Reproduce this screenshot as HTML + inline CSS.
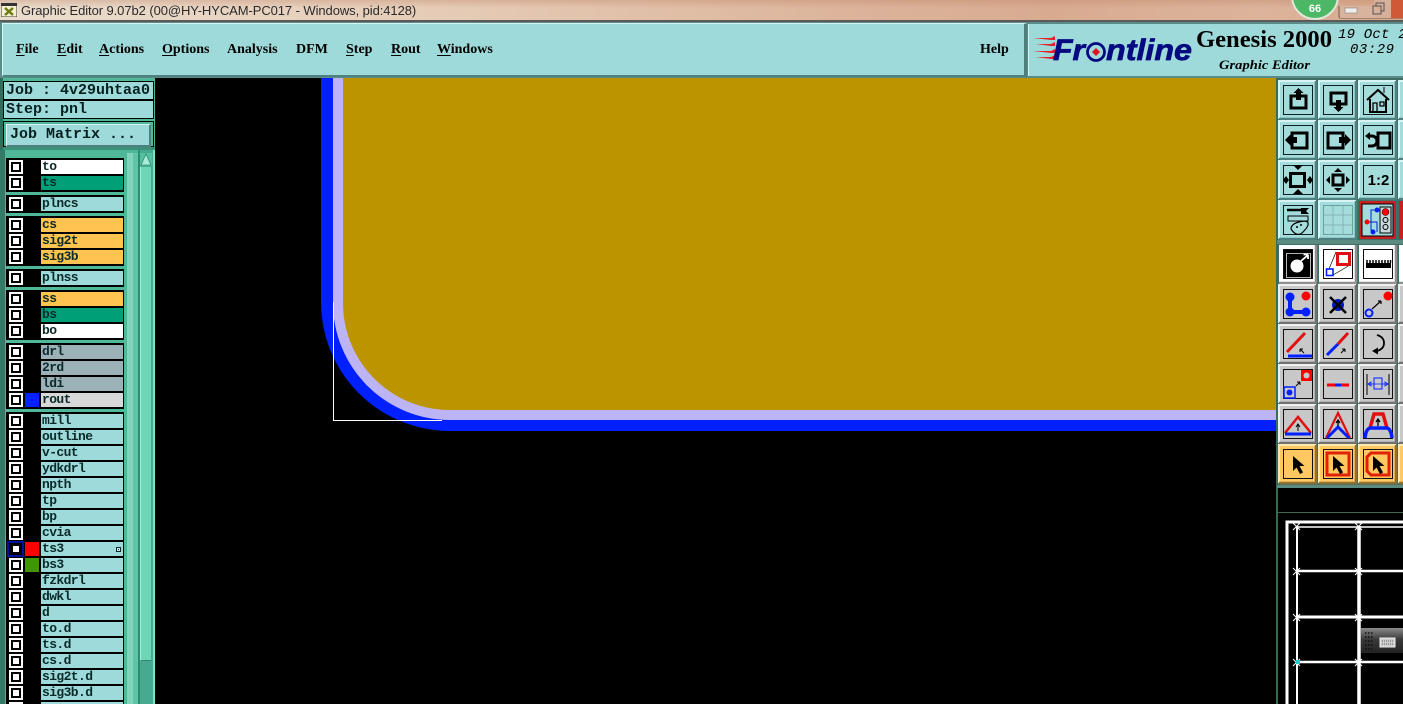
<!DOCTYPE html>
<html><head><meta charset="utf-8"><style>
html,body{margin:0;padding:0;background:#000}
#p{position:relative;width:1403px;height:704px;overflow:hidden;background:#000;font-family:"Liberation Sans",sans-serif}
#p div{position:absolute}
.m{font:bold 14px/16px "Liberation Serif",serif;top:42px;color:#000}
.m u{text-underline-offset:2px}
.g{left:6px;width:118px;background:#000}
.l{left:41px;width:82px;height:14px;background:#9fdada;color:#0a2a2a;font:bold 13px/14px "Liberation Mono",monospace;letter-spacing:-.6px;padding-left:1px;box-sizing:border-box;white-space:pre}
.o{background:#ffc44f}.t{background:#009f77}.w{background:#fff}.s{background:#9cb0b8}.r{background:#d8d8d8}
.j{left:3px;width:151px;border:1px solid #000;background:#9fdada;box-sizing:border-box;font:bold 15px/17px "Liberation Mono",monospace;color:#062020;padding-left:2px;white-space:pre}
</style></head><body><div id="p">

<div style="left:0;top:0;width:1403px;height:21px;background:linear-gradient(90deg,#eadccd 0,#e6cdb8 30%,#dcb49b 60%,#d8ab90 75%,#dcb49b 90%,#d9a88c 100%)"></div>
<div style="left:0;top:0;width:1403px;height:8px;background:linear-gradient(180deg,rgba(190,130,100,.35),rgba(190,130,100,0))"></div>
<div style="left:0;top:20px;width:1403px;height:2px;background:#5a5a58"></div>
<svg style="position:absolute;left:1px;top:3px" width="16" height="14"><rect width="16" height="14" fill="#f4f0d0" stroke="#333"/><rect x="0" y="0" width="16" height="3" fill="#333"/><path d="M4 5l8 7M12 5l-8 7" stroke="#6a7a10" stroke-width="2.4"/></svg>
<div style="left:21px;top:2px;font:13px/17px 'Liberation Sans',sans-serif;letter-spacing:-.08px;color:#2a2a2a;white-space:pre">Graphic Editor 9.07b2 (00@HY-HYCAM-PC017 - Windows, pid:4128)</div>
<svg style="position:absolute;left:1285px;top:0" width="118" height="22">
<circle cx="30" cy="-4" r="23" fill="#4cb865" stroke="#dfe8d8" stroke-width="2"/>
<text x="30" y="12" text-anchor="middle" font-family="Liberation Sans" font-weight="bold" font-size="11" fill="#fff">66</text>
<path d="M54 6v10q0 2 2 2h62" fill="none" stroke="#6a5a50"/>
<rect x="55" y="6" width="34" height="12" fill="#d8b49e"/><rect x="60" y="8" width="12" height="5" fill="#eee" stroke="#8a8078" stroke-width=".6"/>
<rect x="89" y="0" width="29" height="18" fill="#d6b09a"/><rect x="91" y="3" width="8" height="8" fill="none" stroke="#555"/><rect x="88" y="6" width="8" height="8" fill="#d6b09a" stroke="#555"/><rect x="106" y="0" width="12" height="18" fill="#d05a38"/>
</svg>

<div style="left:0;top:22px;width:1403px;height:56px;background:#5a8a8a"></div>
<div style="left:2px;top:23px;width:1021px;height:51px;background:#9fdada;border-top:1px solid #d8f4f4;border-left:1px solid #d8f4f4;border-bottom:2px solid #4f8080;border-right:3px solid #4f8080"></div>
<div style="left:1028px;top:24px;width:375px;height:52px;background:#9fdada;border-left:1px solid #d8f4f4"></div>
<div class="m" style="left:16px"><u>F</u>ile</div>
<div class="m" style="left:57px"><u>E</u>dit</div>
<div class="m" style="left:99px"><u>A</u>ctions</div>
<div class="m" style="left:162px"><u>O</u>ptions</div>
<div class="m" style="left:227px">Analysis</div>
<div class="m" style="left:296px">DFM</div>
<div class="m" style="left:346px"><u>S</u>tep</div>
<div class="m" style="left:391px"><u>R</u>out</div>
<div class="m" style="left:437px"><u>W</u>indows</div>
<div class="m" style="left:980px">Help</div>
<svg style="position:absolute;left:1030px;top:28px" width="373" height="48">
<path d="M3 10h18l4-2v4H21zM6 16h15l4-2v4H21zM3 23h18l4-2v4H21zM6 29h15l4-2v4H21z" fill="#e8202a"/>
<text x="23" y="32" font-family="Liberation Sans" font-weight="bold" font-style="italic" font-size="30" fill="#060a80" stroke="#060a80" stroke-width=".7" textLength="32" lengthAdjust="spacingAndGlyphs">Fr</text>
<circle cx="66" cy="24" r="8.500" fill="none" stroke="#060a80" stroke-width="2.800"/><path d="M66 20l4 4-4 4-4-4z" fill="#e01020"/>
<text x="76" y="32" font-family="Liberation Sans" font-weight="bold" font-style="italic" font-size="30" fill="#060a80" stroke="#060a80" stroke-width=".7" textLength="86" lengthAdjust="spacingAndGlyphs">ntline</text>
<text x="166" y="19" font-family="Liberation Serif" font-weight="bold" font-size="24" fill="#000" textLength="136" lengthAdjust="spacingAndGlyphs">Genesis 2000</text>
<text x="189" y="41" font-family="Liberation Serif" font-weight="bold" font-style="italic" font-size="13" fill="#000" textLength="91" lengthAdjust="spacingAndGlyphs">Graphic Editor</text>
<text x="308" y="10" font-family="Liberation Mono" font-style="italic" font-size="14" letter-spacing=".2" fill="#000" xml:space="preserve">19 Oct 2</text>
<text x="320" y="25" font-family="Liberation Mono" font-style="italic" font-size="14" letter-spacing=".5" fill="#000">03:29</text>
</svg>

<!-- sidebar -->
<div style="left:0;top:78px;width:155px;height:626px;background:#4fb898"></div>
<div style="left:0;top:78px;width:3px;height:626px;background:#2f6e5c"></div>
<div style="left:3px;top:146px;width:152px;height:4px;background:#3c8f78"></div>
<div style="left:0;top:150px;width:5px;height:554px;background:#347a66"></div>
<div class="j" style="top:81px;height:19px">Job : 4v29uhtaa0</div>
<div class="j" style="top:100px;height:19px">Step: pnl</div>
<div class="j" style="top:121px;height:26px;background:#4fb898"></div>
<div style="left:6px;top:124px;width:139px;height:20px;background:#9fdada;border-top:1px solid #d8f4f4;border-left:1px solid #d8f4f4;border-bottom:2px solid #4f8080;border-right:2px solid #4f8080;font:bold 15px/19px 'Liberation Mono',monospace;color:#062020;white-space:pre;padding-left:3px">Job Matrix ...</div>

<div style="left:127px;top:153px;width:6px;height:551px;background:#80d4bc"></div>
<div style="left:133px;top:153px;width:5px;height:551px;background:#5fc4a8"></div>
<div style="left:138px;top:150px;width:2px;height:554px;background:#2f8a72"></div>
<div style="left:140px;top:150px;width:13px;height:554px;background:#46aa90"></div>
<div style="left:153px;top:150px;width:2px;height:554px;background:#8fdcc4"></div>
<div style="left:140px;top:167px;width:11px;height:494px;background:#6cd6b6;border-left:1px solid #a8ecd8;border-bottom:1px solid #2f8a72;box-sizing:border-box"></div>
<div style="left:140px;top:153px;width:12px;height:13px;background:#55c0a0"></div>
<svg style="position:absolute;left:140px;top:153px" width="12" height="13"><path d="M6 1l5 11H1z" fill="#a8ecd8" stroke="#2f8a72" stroke-width=".8"/></svg>

<div class="g" style="top:158px;height:34px"></div>
<div class="g" style="top:195px;height:18px"></div>
<div class="g" style="top:216px;height:50px"></div>
<div class="g" style="top:269px;height:18px"></div>
<div class="g" style="top:290px;height:50px"></div>
<div class="g" style="top:343px;height:66px"></div>
<div class="g" style="top:412px;height:292px"></div>

<div class="l w" style="top:160px">to</div>
<div class="l t" style="top:176px">ts</div>
<div class="l" style="top:197px">plncs</div>
<div class="l o" style="top:218px">cs</div>
<div class="l o" style="top:234px">sig2t</div>
<div class="l o" style="top:250px">sig3b</div>
<div class="l" style="top:271px">plnss</div>
<div class="l o" style="top:292px">ss</div>
<div class="l t" style="top:308px">bs</div>
<div class="l w" style="top:324px">bo</div>
<div class="l s" style="top:345px">drl</div>
<div class="l s" style="top:361px">2rd</div>
<div class="l s" style="top:377px">ldi</div>
<div class="l r" style="top:393px">rout</div>
<div class="l" style="top:414px">mill</div>
<div class="l" style="top:430px">outline</div>
<div class="l" style="top:446px">v-cut</div>
<div class="l" style="top:462px">ydkdrl</div>
<div class="l" style="top:478px">npth</div>
<div class="l" style="top:494px">tp</div>
<div class="l" style="top:510px">bp</div>
<div class="l" style="top:526px">cvia</div>
<div class="l" style="top:542px">ts3</div>
<div class="l" style="top:558px">bs3</div>
<div class="l" style="top:574px">fzkdrl</div>
<div class="l" style="top:590px">dwkl</div>
<div class="l" style="top:606px">d</div>
<div class="l" style="top:622px">to.d</div>
<div class="l" style="top:638px">ts.d</div>
<div class="l" style="top:654px">cs.d</div>
<div class="l" style="top:670px">sig2t.d</div>
<div class="l" style="top:686px">sig3b.d</div>
<div class="l" style="top:702px"></div>

<svg style="position:absolute;left:0;top:0" width="128" height="704">
<defs><g id="cb"><rect x="9" width="14" height="14" fill="#fff"/><rect x="11" y="2" width="10" height="10" fill="#000"/><rect x="13" y="4" width="6" height="6" fill="#fff"/></g></defs>
<use href="#cb" y="160"/><use href="#cb" y="176"/><use href="#cb" y="197"/><use href="#cb" y="218"/><use href="#cb" y="234"/><use href="#cb" y="250"/><use href="#cb" y="271"/><use href="#cb" y="292"/><use href="#cb" y="308"/><use href="#cb" y="324"/><use href="#cb" y="345"/><use href="#cb" y="361"/><use href="#cb" y="377"/><use href="#cb" y="393"/><use href="#cb" y="414"/><use href="#cb" y="430"/><use href="#cb" y="446"/><use href="#cb" y="462"/><use href="#cb" y="478"/><use href="#cb" y="494"/><use href="#cb" y="510"/><use href="#cb" y="526"/><use href="#cb" y="542"/><use href="#cb" y="558"/><use href="#cb" y="574"/><use href="#cb" y="590"/><use href="#cb" y="606"/><use href="#cb" y="622"/><use href="#cb" y="638"/><use href="#cb" y="654"/><use href="#cb" y="670"/><use href="#cb" y="686"/><use href="#cb" y="702"/>
<rect x="8" y="542" width="15" height="14" fill="none" stroke="#0010a0" stroke-width="2"/><rect x="10" y="544" width="11" height="10" fill="none" stroke="#000" stroke-width="2"/>
<rect x="25" y="393" width="14" height="14" fill="#0020ff"/>
<rect x="25" y="542" width="14" height="14" fill="#ff0000"/>
<rect x="25" y="558" width="14" height="14" fill="#3f9800"/>
<rect x="116.500" y="547.500" width="4" height="4" fill="#cfeaea" stroke="#0a2a2a"/><rect x="118" y="549" width="1" height="1" fill="#0a2a2a"/>
</svg>

<!-- canvas -->
<svg style="position:absolute;left:155px;top:78px" width="1122" height="626">
<g transform="translate(-155 -78)">
<path d="M321 78V302A129 129 0 0 0 450 431H1277V78Z" fill="#0020ff"/>
<path d="M333 78V303A117 117 0 0 0 450 420H1277V78Z" fill="#bcb4f4"/>
<path d="M343 78V303A107 107 0 0 0 450 410H1277V78Z" fill="#bc9400"/>
<path d="M333.500 302V420.500H442" fill="none" stroke="#fff" stroke-width="1"/>
</g>
</svg>

<!-- right panel -->
<div style="left:1276px;top:78px;width:127px;height:407px;background:#3f6f64"></div>
<div style="left:1276px;top:78px;width:2px;height:626px;background:#3a6a5a"></div>
<svg style="position:absolute;left:1277px;top:78px" width="126" height="626">
<defs>
<g id="bt"><rect x="2" y="3" width="37" height="38" fill="#a4dcdc"/><path d="M2 41V3h37" fill="none" stroke="#d8f4f4" stroke-width="2"/><path d="M2 41h37V3" fill="none" stroke="#4f8080" stroke-width="2.500"/><rect x="6.500" y="7.500" width="29" height="29" fill="#a4dcdc" stroke="#0a2020"/></g>
<g id="bg"><rect x="2" y="3" width="37" height="38" fill="#c8c8c8"/><path d="M2 41V3h37" fill="none" stroke="#f0f0f0" stroke-width="2"/><path d="M2 41h37V3" fill="none" stroke="#707070" stroke-width="2.500"/><rect x="6.500" y="7.500" width="29" height="29" fill="#c8c8c8" stroke="#101010"/></g>
<g id="by"><rect x="2" y="3" width="37" height="38" fill="#ffc860"/><path d="M2 41V3h37" fill="none" stroke="#ffe8b0" stroke-width="2"/><path d="M2 41h37V3" fill="none" stroke="#907030" stroke-width="2.500"/><rect x="6.500" y="7.500" width="29" height="29" fill="#ffc860" stroke="#101010"/></g>
<g id="bw"><rect x="2" y="3" width="37" height="38" fill="#fff"/><path d="M2 41h37V3" fill="none" stroke="#909090" stroke-width="2.500"/><rect x="6.500" y="7.500" width="29" height="29" fill="#fff" stroke="#101010"/></g>
<path id="ar" d="M0 0v15l3.500-3.500 3.500 6.500 3-1.500-3.500-6.500h5z" fill="#000"/>
</defs>

<!-- row 1 -->
<g transform="translate(0 0)"><use href="#bt"/><path d="M14 18h15v12H14z" fill="none" stroke="#000" stroke-width="3"/><path d="M21.500 10l5 5h-2.500v7h-5v-7h-2.500z" fill="#000"/></g>
<g transform="translate(40 0)"><use href="#bt"/><path d="M14 15h15v11H14z" fill="none" stroke="#000" stroke-width="3"/><path d="M21.500 34l5-5h-2.500v-7h-5v7h-2.500z" fill="#000"/></g>
<g transform="translate(80 0)"><use href="#bt"/><path d="M10 22l11-10 11 10M13 21v13h16V21" fill="none" stroke="#000" stroke-width="2"/><path d="M16 25h4v9h-4zM23 24h4v4h-4z" fill="none" stroke="#000" stroke-width="1.300"/><path d="M27 9v6" stroke="#000"/></g>
<g transform="translate(120 0)"><use href="#bt"/></g>
<!-- row 2 -->
<g transform="translate(0 40)"><use href="#bt"/><path d="M15 15h15v15H15z" fill="none" stroke="#000" stroke-width="3"/><path d="M8 22l6-6v3h6v6h-6v3z" fill="#000"/></g>
<g transform="translate(40 40)"><use href="#bt"/><path d="M11 15h15v15H11z" fill="none" stroke="#000" stroke-width="3"/><path d="M34 22l-6-6v3h-6v6h6v3z" fill="#000"/></g>
<g transform="translate(80 40)"><use href="#bt"/><path d="M21 15h12v15H21z" fill="none" stroke="#000" stroke-width="3"/><path d="M11 18h4a4.500 4.500 0 0 1 0 10h-4" fill="none" stroke="#000" stroke-width="3"/><path d="M8 18l5-4v8z" fill="#000"/></g>
<g transform="translate(120 40)"><use href="#bt"/></g>
<!-- row 3 -->
<g transform="translate(0 80)"><use href="#bt"/><path d="M13.500 15.500h14v13h-14z" fill="none" stroke="#000" stroke-width="3"/><path d="M16 7h10l-5 5zM16 36h10l-5-5zM6 22l3-4 3 4-3 4zM30 22l3-4 3 4-3 4z" fill="#000"/></g>
<g transform="translate(40 80)"><use href="#bt"/><path d="M16 17h10v10H16z" fill="none" stroke="#000" stroke-width="3"/><path d="M21 10l4 4h-8zM21 34l4-4h-8zM9 22l4-4v8zM33 22l-4-4v8z" fill="#000"/></g>
<g transform="translate(80 80)"><use href="#bt"/><text x="21.500" y="27" text-anchor="middle" font-family="Liberation Sans" font-weight="bold" font-size="15" fill="#000">1:2</text></g>
<g transform="translate(120 80)"><use href="#bt"/></g>
<!-- row 4 -->
<g transform="translate(0 120)"><use href="#bt"/><path d="M10 12h15" stroke="#000" stroke-width="2.500"/><path d="M24 10h8l-3 3 3 3h-8z" fill="#000"/><path d="M11 18h20v5H11z" fill="none" stroke="#000"/><path d="M14 31q0-5 8-7t9 1-5 9-12-3z" fill="none" stroke="#000" stroke-width="1.200"/><circle cx="20" cy="29" r="1" fill="#000"/><circle cx="24" cy="27" r="1" fill="#000"/></g>
<g transform="translate(40 120)"><rect x="2" y="3" width="37" height="38" fill="#a4dcdc"/><path d="M2 41V3h37" fill="none" stroke="#d8f4f4" stroke-width="2"/><path d="M2 41h37V3" fill="none" stroke="#4f8080" stroke-width="2.500"/><rect x="6.500" y="7.500" width="29" height="29" fill="#a4dcdc" stroke="#6aa0a0"/><path d="M16 8v28M26 8v28M7 17h28M7 27h28" stroke="#88b4b8"/></g>
<g transform="translate(80 120)"><rect x="2" y="3" width="37" height="38" fill="#c82020"/><rect x="5" y="6" width="31" height="32" fill="#a4dcdc" stroke="#000"/><rect x="23" y="9" width="11" height="26" fill="#c8d8d8" stroke="#000"/><circle cx="28.500" cy="14" r="3.500" fill="#f00" stroke="#000" stroke-width=".5"/><circle cx="28.500" cy="22" r="2.500" fill="none" stroke="#000"/><circle cx="28.500" cy="29" r="2.500" fill="none" stroke="#000"/><path d="M20 12h-6v20h3M10 24h10V34" fill="none" stroke="#0020d0"/><circle cx="20" cy="12" r="2.500" fill="#0020ff"/><circle cx="16" cy="34" r="2.500" fill="#0020ff"/><circle cx="10" cy="24" r="2.500" fill="#f00"/></g>
<rect x="122" y="123" width="4" height="38" fill="#c82020"/>
<rect x="0" y="162" width="126" height="4" fill="#5a8a80"/>

<!-- row 5 -->
<g transform="translate(0 164)"><use href="#bw"/><rect x="7" y="8" width="28" height="28" fill="#000"/><rect x="9.500" y="11.500" width="24" height="24" fill="none" stroke="#fff" stroke-width=".7"/><circle cx="20" cy="24" r="6.500" fill="#fff"/><path d="M24 19l7-6M31 12.500h-4.500M31 12.500V17" stroke="#fff" stroke-width="1.800" fill="none"/></g>
<g transform="translate(40 164)"><use href="#bw"/><path d="M12 27l7-17M16 33l17-10" stroke="#000" stroke-width=".7"/><rect x="9.500" y="27" width="6.500" height="6.500" fill="#fff" stroke="#0020ff" stroke-width="1.600"/><rect x="20.500" y="11.500" width="12" height="11" fill="#fff" stroke="#e01010" stroke-width="3"/></g>
<g transform="translate(80 164)"><use href="#bw"/><path d="M9 21h25v5H9z" fill="#000"/><path d="M10 18v3M13 18v3M16 18v3M19 18v3M22 18v3M25 18v3M28 18v3M31 18v3M33.500 18v3" stroke="#000" stroke-width="1.500"/></g>
<g transform="translate(120 164)"><use href="#bw"/></g>
<!-- row 6 -->
<g transform="translate(0 204)"><use href="#bg"/><path d="M13 15v15h16" fill="none" stroke="#0020ff" stroke-width="4"/><circle cx="13" cy="15" r="4.500" fill="#0020ff"/><circle cx="13" cy="30" r="4.500" fill="#0020ff"/><circle cx="29" cy="30" r="4.500" fill="#0020ff"/><circle cx="29" cy="14" r="4.500" fill="#f00"/></g>
<g transform="translate(40 204)"><use href="#bg"/><circle cx="21" cy="23" r="6" fill="#0018c0"/><path d="M13 15l16 16M29 15L13 31" stroke="#000" stroke-width="2.500"/></g>
<g transform="translate(80 204)"><use href="#bg"/><circle cx="31" cy="14" r="4.500" fill="#f00"/><circle cx="12" cy="31" r="3.500" fill="none" stroke="#0020ff" stroke-width="2"/><path d="M15 27l9-8M24 19h-3M24 19v3" stroke="#000" fill="none" stroke-width="1.200"/></g>
<g transform="translate(120 204)"><use href="#bg"/></g>
<!-- row 7 -->
<g transform="translate(0 244)"><use href="#bg"/><path d="M10 30l18-19" stroke="#e01010" stroke-width="3"/><path d="M11 34h24" stroke="#0020ff" stroke-width="3"/><path d="M23 27l4 4M23 27v3M23 27h3" stroke="#000" fill="none"/></g>
<g transform="translate(40 244)"><use href="#bg"/><path d="M10 33l11-11" stroke="#0020ff" stroke-width="3"/><path d="M21 22l10-11" stroke="#e01010" stroke-width="3"/><path d="M24 31l4-4M28 27h-3M28 27v3" stroke="#000" fill="none"/></g>
<g transform="translate(80 244)"><use href="#bg"/><path d="M20 13q7 2 7 8t-7 8" fill="none" stroke="#000" stroke-width="1.800"/><path d="M15 29l6-3.500v7z" fill="#000"/></g>
<g transform="translate(120 244)"><use href="#bg"/></g>
<!-- row 8 -->
<g transform="translate(0 284)"><use href="#bg"/><rect x="24" y="8" width="11" height="11" fill="#f00"/><circle cx="29.500" cy="13.500" r="3" fill="#c8c8c8"/><rect x="7" y="25" width="11" height="11" fill="#c8c8c8" stroke="#0020ff" stroke-width="1.500"/><circle cx="12.500" cy="30.500" r="3" fill="#0020ff"/><path d="M19 24l4-4M23 20h-3M23 20v3" stroke="#000" fill="none"/></g>
<g transform="translate(40 284)"><use href="#bg"/><path d="M10 23h10" stroke="#f00" stroke-width="3"/><path d="M18 23h6" stroke="#0020ff" stroke-width="3"/><path d="M24 23h8" stroke="#f00" stroke-width="3"/></g>
<g transform="translate(80 284)"><use href="#bg"/><path d="M10 12v21M32 12v21" stroke="#000"/><rect x="17" y="16" width="8" height="11" fill="none" stroke="#0020ff"/><path d="M11 22h20M11 22l3-2v4zM31 22l-3-2v4z" stroke="#0020ff" fill="none" stroke-width=".8"/></g>
<g transform="translate(120 284)"><use href="#bg"/></g>
<!-- row 9 -->
<g transform="translate(0 324)"><use href="#bg"/><path d="M8 31l13-16 13 16" fill="none" stroke="#e01010" stroke-width="2.500"/><path d="M8 32h26" stroke="#0020ff" stroke-width="3"/><path d="M21 29v-6M19 25l2-3 2 3" stroke="#000" fill="none"/></g>
<g transform="translate(40 324)"><use href="#bg"/><path d="M9 36L21 11l12 25" fill="none" stroke="#e01010" stroke-width="2.200"/><path d="M10 36l11-11 11 11" fill="none" stroke="#0020ff" stroke-width="3"/><path d="M21 24v-5M19 21l2-3 2 3" stroke="#000" fill="none" stroke-width="1.300"/></g>
<g transform="translate(80 324)"><use href="#bg"/><path d="M13 26l4-14h9l4 14" fill="none" stroke="#e01010" stroke-width="3.500"/><path d="M8 36q1-10 6-10h15q5 0 6 10" fill="none" stroke="#0020ff" stroke-width="3.500"/><path d="M21 24v-6M19 20l2-3 2 3" stroke="#000" fill="none" stroke-width="1.300"/></g>
<g transform="translate(120 324)"><use href="#bg"/></g>
<!-- row 10 -->
<g transform="translate(0 364)"><use href="#by"/><use href="#ar" x="16" y="14"/></g>
<g transform="translate(40 364)"><use href="#by"/><rect x="10" y="11" width="22" height="22" fill="none" stroke="#e02000" stroke-width="3"/><use href="#ar" x="16" y="14"/></g>
<g transform="translate(80 364)"><use href="#by"/><path d="M14 11h18v22H14l-4-4V15z" fill="none" stroke="#e02000" stroke-width="3"/><use href="#ar" x="16" y="14"/></g>
<g transform="translate(120 364)"><use href="#by"/></g>

<rect x="0" y="407" width="126" height="3" fill="#5a8a80"/>
<rect x="0" y="410" width="126" height="216" fill="#000"/>
<path d="M.5 410V626" stroke="#3a6a4a"/>
<path d="M0 434.500H126" stroke="#3a6a4a"/>
<g fill="none" stroke="#fff">
<path d="M10 626V444H126" stroke-width="3"/>
<path d="M20 448V626" stroke-width="2"/>
<path d="M82 448V626" stroke-width="3.500"/>
<path d="M19 449H126" stroke-width="1.500"/>
<path d="M19 493H126" stroke-width="2.500"/>
<path d="M19 539H126" stroke-width="3"/>
<path d="M19 584H126" stroke-width="2.500"/>
<g stroke-width="1"><path d="M16 445l7 7M23 445l-7 7M78 445l7 7M85 445l-7 7M16 490l7 7M23 490l-7 7M78 490l7 7M85 490l-7 7M16 536l7 7M23 536l-7 7M78 536l7 7M85 536l-7 7M16 581l7 7M23 581l-7 7M78 581l7 7M85 581l-7 7"/></g>
</g>
<rect x="19" y="582" width="4" height="4" fill="#20d0d0"/>
<defs><linearGradient id="kb" x1="0" y1="0" x2="0" y2="1"><stop offset="0" stop-color="#8a8a8a"/><stop offset=".45" stop-color="#3a3a3a"/><stop offset="1" stop-color="#222"/></linearGradient></defs>
<rect x="84" y="550" width="42" height="25" fill="url(#kb)"/>
<path d="M88 555h8M88 559h8M88 563h8M88 567h8M88 571h8" stroke="#111" stroke-width="1.500" stroke-dasharray="1.500 1.500"/>
<rect x="103" y="560" width="15" height="9" fill="#ccc" stroke="#eee"/><path d="M105 563h11M105 566h11" stroke="#666" stroke-dasharray="1 1"/>
</svg>
</div></body></html>
